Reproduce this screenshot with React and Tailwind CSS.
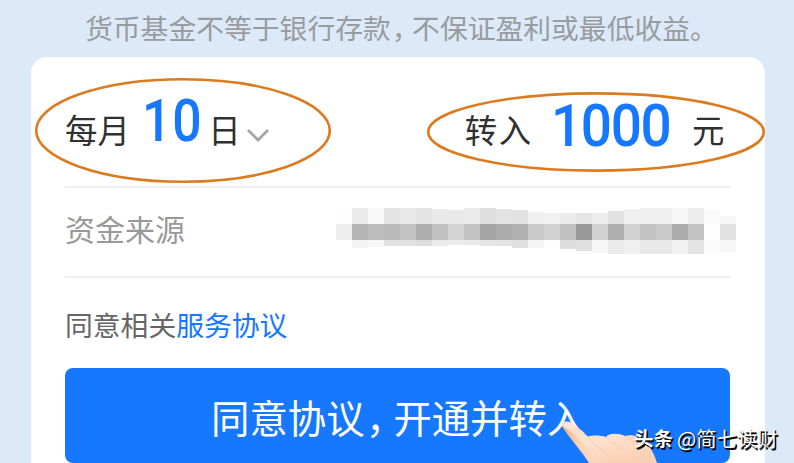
import React from "react";

// One entry per mosaic column: top inset, top / middle / bottom grey, bottom height
const mosaic = [
  [0, "#fefefe", "#eeeeee", "#ffffff", 8],
  [0, "#ebebeb", "#b5b5b5", "#f4f4f4", 8],
  [0, "#f8f8f8", "#bebebe", "#f7f7f7", 7],
  [0, "#e3e3e3", "#b9b9b9", "#e2e2e2", 6],
  [0, "#e9e9e9", "#c2c2c2", "#e2e2e2", 6],
  [0, "#e3e3e3", "#aeaeae", "#dddddd", 6],
  [1, "#e9e9e9", "#c0c0c0", "#ebebeb", 6],
  [2, "#e8e8e8", "#d4d4d4", "#ebebeb", 5],
  [0, "#ebebeb", "#c3c3c3", "#eaeaea", 5],
  [0, "#dfdfdf", "#a4a4a4", "#e6e6e6", 6],
  [1, "#e3e3e3", "#acacac", "#e4e4e4", 6],
  [2, "#e2e2e2", "#b1b1b1", "#e0e0e0", 8],
  [4, "#efefef", "#c9c9c9", "#f5f5f5", 8],
  [5, "#f1f1f1", "#d2d2d2", "#fdfdfd", 8],
  [5, "#ebebeb", "#c0c0c0", "#dddddd", 9],
  [5, "#e5e5e5", "#989898", "#e0e0e0", 11],
  [5, "#ececec", "#d2d2d2", "#f6f6f6", 13],
  [3, "#e2e2e2", "#b0b0b0", "#eaeaea", 14],
  [1, "#efefef", "#d2d2d2", "#f0f0f0", 14],
  [0, "#efefef", "#c3c3c3", "#e9e9e9", 14],
  [0, "#efefef", "#c9c9c9", "#e9e9e9", 14],
  [0, "#f6f6f6", "#acacac", "#f2f2f2", 14],
  [0, "#ededed", "#c3c3c3", "#e4e4e4", 14],
  [2, "#fafafa", "#fefefe", "#fbfbfb", 13],
  [8, "#f6f6f6", "#e1e1e1", "#f7f7f7", 12],
];

function Mosaic() {
  return (
    <div className="flex h-[46px] items-start">
      {mosaic.map(([inset, top, mid, bottom, h], i) => (
        <div key={i} className="w-4" style={{ paddingTop: inset }}>
          <div style={{ height: 16 - inset, background: top }} />
          <div className="h-4" style={{ background: mid }} />
          <div style={{ height: h, background: bottom }} />
        </div>
      ))}
    </div>
  );
}

function Ellipses() {
  return (
    <svg className="pointer-events-none absolute inset-0" width="794" height="463" fill="none" stroke="#dc7a20" strokeWidth="2.6">
      <ellipse cx="183" cy="130.5" rx="146.8" ry="51.2" />
      <ellipse cx="596" cy="132" rx="167.8" ry="38.6" />
    </svg>
  );
}

function Hand() {
  return (
    <svg className="pointer-events-none absolute left-[550px] top-[410px]" width="120" height="53" viewBox="550 410 120 53">
      <defs>
        <linearGradient id="skin" x1="0" y1="0" x2="0.6" y2="1">
          <stop offset="0" stopColor="#fbd9c4" />
          <stop offset="0.45" stopColor="#fce3d0" />
          <stop offset="1" stopColor="#fad0b4" />
        </linearGradient>
        <linearGradient id="shade" x1="0" y1="0" x2="1" y2="0">
          <stop offset="0" stopColor="#f2b07c" />
          <stop offset="1" stopColor="#fad9bf" stopOpacity="0" />
        </linearGradient>
      </defs>
      <path d="M562 426C561 422 567 420 572 423L588 436.500C593 435 600 435 606 437C609 433 618 433 625 436C631 434 638 436 642 440C650 445 654 453 657 463H589C582 451 570 438 562 426Z" fill="url(#skin)" />
      <path d="M562 426C568 436 580 450 589 463H598C590 448 575 433 562 426Z" fill="url(#shade)" />
      <path d="M588 437C594 446 601 448 608 455M606 437C610 442 616 443 621 449M625 436C630 440 636 441 642 449" fill="none" stroke="#f3bd9a" strokeWidth="1.2" opacity="0.5" />
      <path d="M563 424.500C564 421 569 421.500 573 425L575 429C570 430 565 428 563 424.500Z" fill="#fde6dc" />
    </svg>
  );
}

export default function App() {
  return (
    <div className="relative h-[463px] w-[794px] overflow-hidden bg-[#dbe9f9] font-['Noto_Sans_CJK_SC',sans-serif]">
      <p className="h-[57px] whitespace-nowrap pl-[85px] pt-[7px] text-[27.8px] leading-10 text-[#999b9e]">
        货币基金不等于银行存款<span className="pl-[1px] pr-[6.4px] [font-feature-settings:'halt']">，</span>不保证盈利或最低收益。
      </p>
      <main className="ml-[31px] h-[430px] w-[734px] rounded-t-2xl bg-white pl-[34px] pr-[35px]">
        <section className="flex h-[131px] justify-between border-b-2 border-[#eeeeef] text-[32.4px] text-[#303030]">
          <div className="flex whitespace-nowrap">
            <span className="pt-[48px] leading-[48px]">每月</span>
            <span className="ml-[12px] w-[66.5px] origin-left scale-x-[0.86] pt-[34px] font-['Roboto',sans-serif] text-[60px] font-medium leading-[60px] tracking-[1px] text-[#1677ff]">10</span>
            <span className="pt-[48px] leading-[48px]">日</span>
            <svg className="ml-[6px] mt-[71px]" width="23" height="16" fill="none" stroke="#a5a5a5" strokeWidth="2.700">
              <path d="M1 2L11 12L21 2" />
            </svg>
          </div>
          <div className="flex whitespace-nowrap pr-[5.6px]">
            <span className="pt-[48px] leading-[48px] tracking-[1.5px]">转入</span>
            <span className="ml-[18px] w-[141.4px] origin-left scale-x-[0.915] pt-[39px] font-['Roboto',sans-serif] text-[60px] font-medium leading-[60px] tracking-[-1.5px] text-[#1677ff]">1000</span>
            <span className="pt-[48px] leading-[48px]">元</span>
          </div>
        </section>
        <section className="flex h-[90px] border-b-2 border-[#eeeeef]">
          <span className="w-[271px] shrink-0 pt-[17px] text-[30px] leading-[46px] text-[#999]">资金来源</span>
          <div className="shrink-0 pt-5">
            <Mosaic />
          </div>
        </section>
        <p className="h-[90px] pt-[25px] text-[27.8px] leading-[42px] text-[#666]">
          同意相关<a className="text-[#1677ff]">服务协议</a>
        </p>
        <button className="block h-[95px] w-[665px] whitespace-nowrap rounded-lg bg-[#1677ff] pl-[146px] pt-[1px] text-left text-[38.4px] leading-[56px] text-white">
          同意协议<span className="pl-[1.5px] pr-[8.1px] [font-feature-settings:'halt']">，</span>开通并转入
        </button>
      </main>
      <Ellipses />
      <Hand />
      <div className="absolute left-[634px] top-[424px] flex items-center whitespace-nowrap text-[19.5px] leading-[28px] text-white [text-shadow:1px_1px_1px_#000,1.5px_1.5px_0_#111]">
        <b className="font-bold">头条</b>
        <span className="ml-[4px] text-[20.4px]">@简七读财</span>
      </div>
    </div>
  );
}
